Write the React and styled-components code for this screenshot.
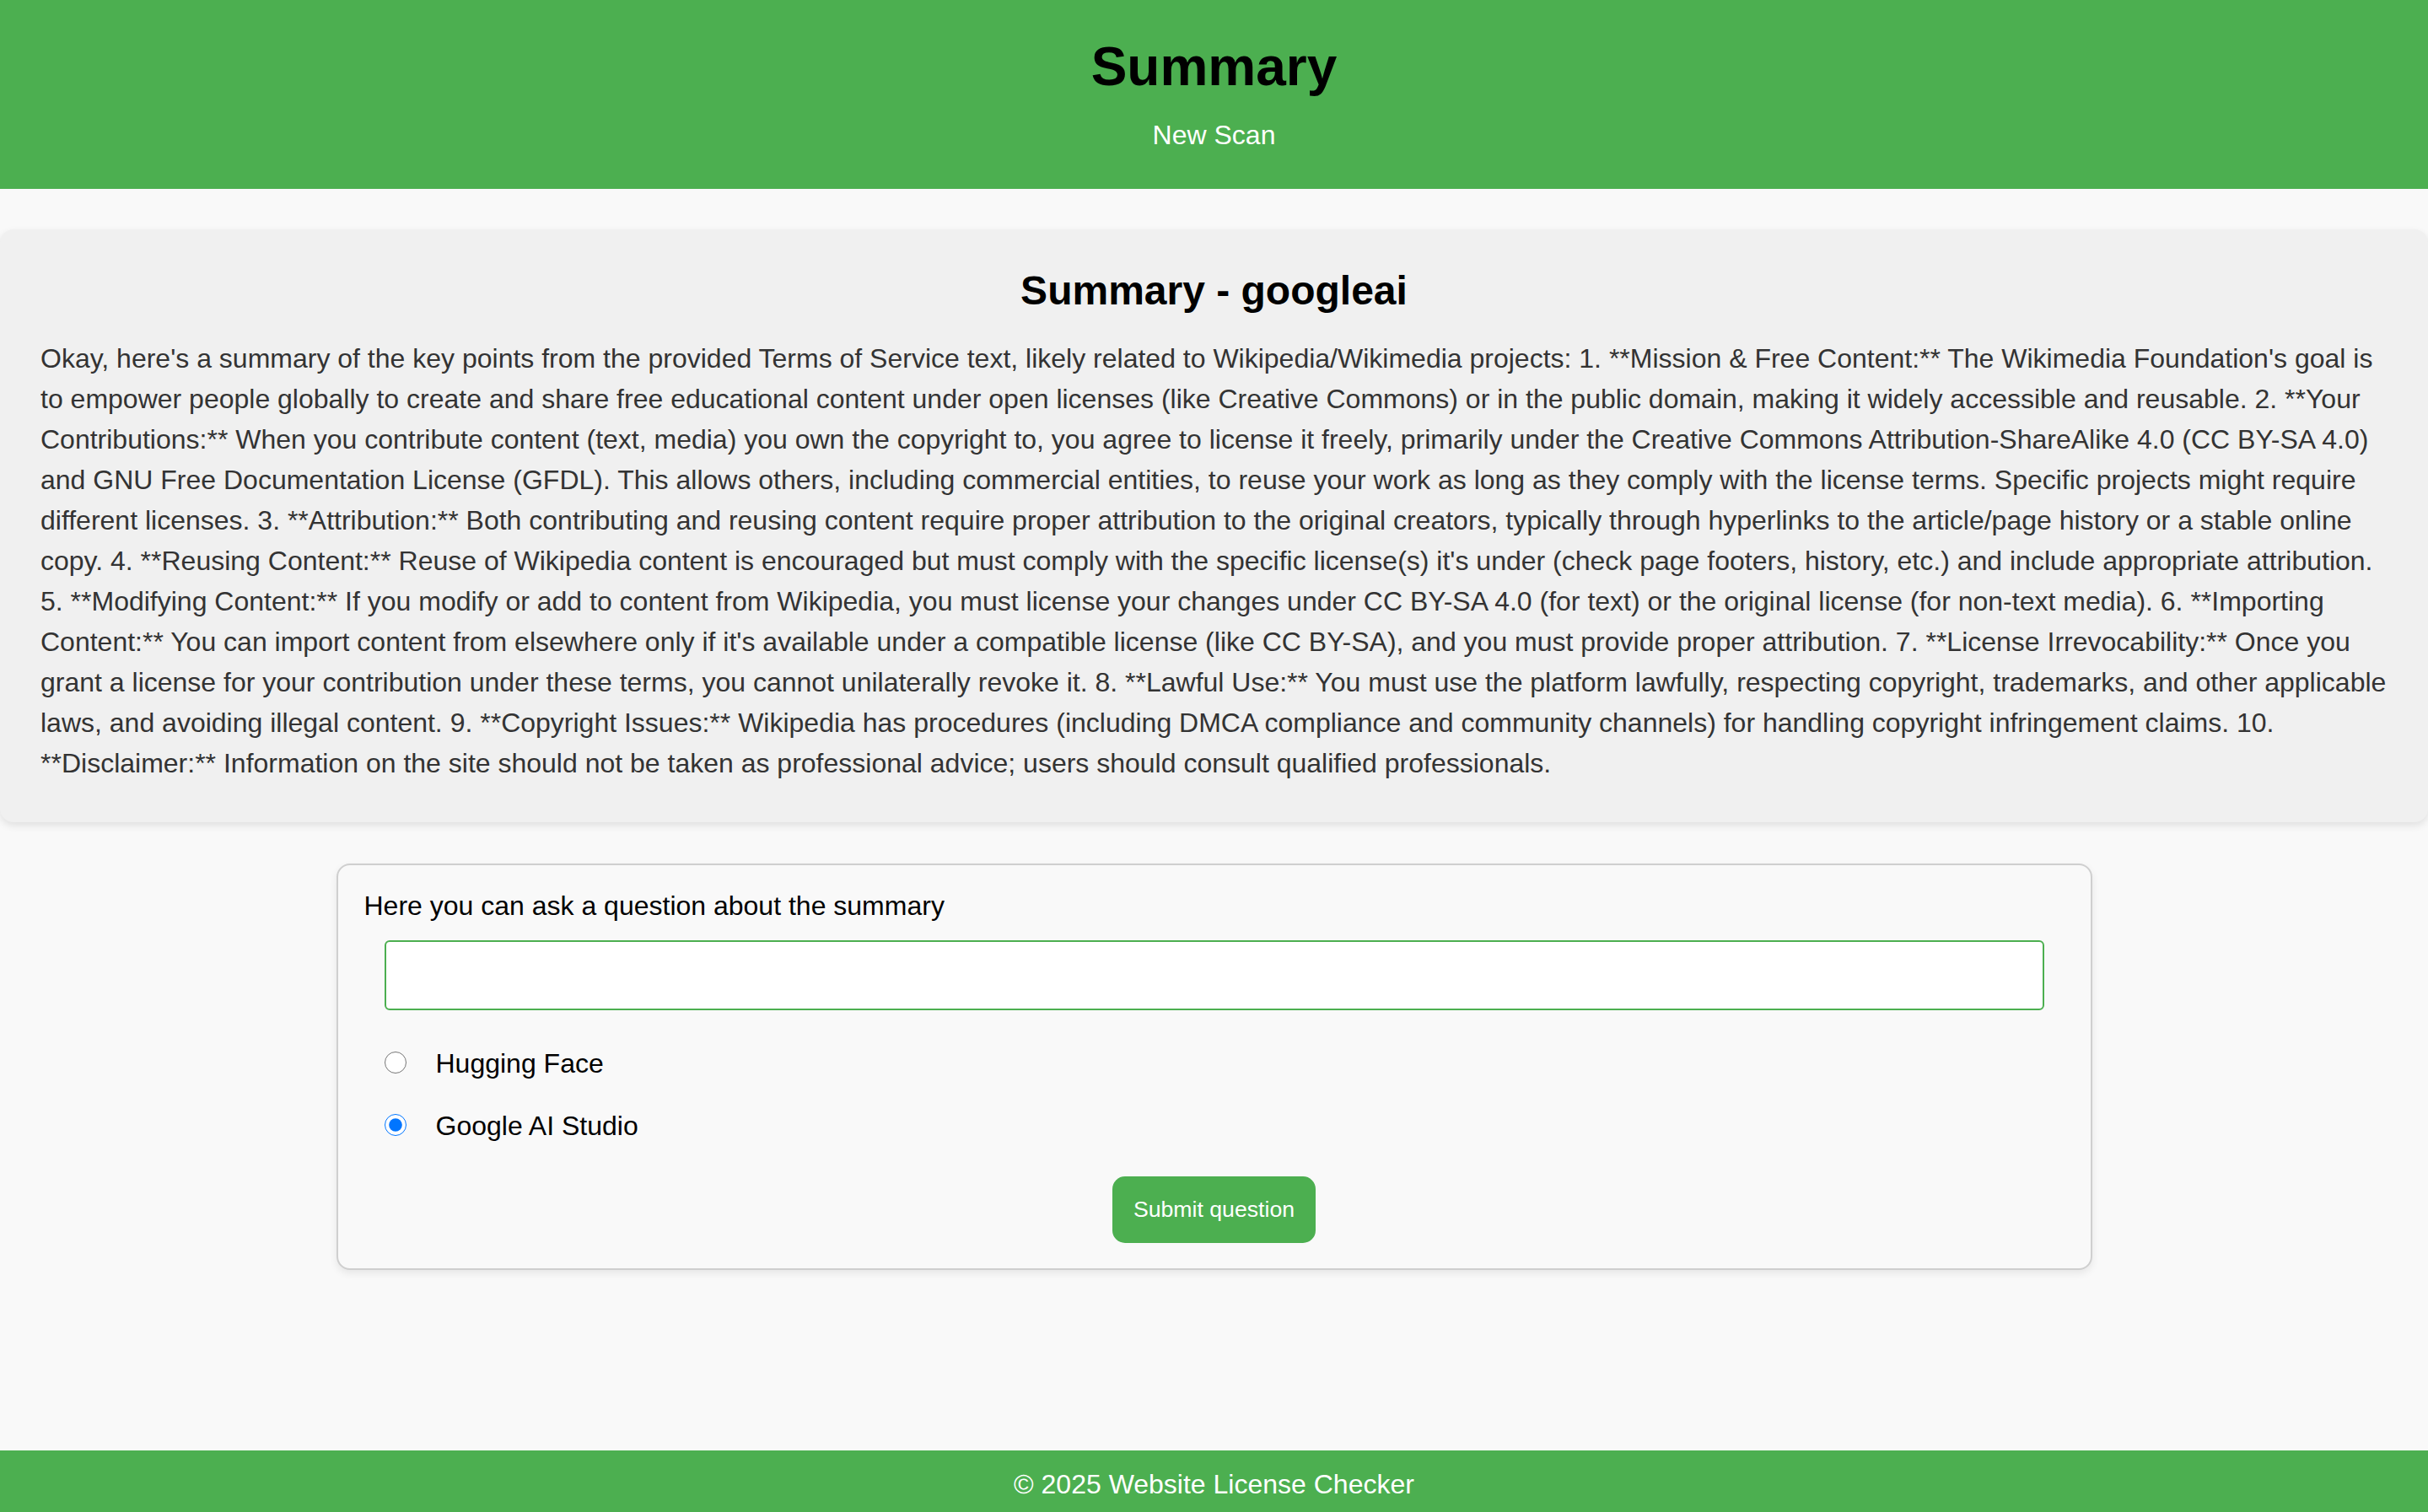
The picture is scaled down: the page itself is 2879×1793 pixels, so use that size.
import React, { useState } from 'react';
import styled, { createGlobalStyle } from 'styled-components';

const GlobalStyle = createGlobalStyle`
  html, body {
    margin: 0;
    padding: 0;
  }
  body {
    background-color: #f9f9f9;
    font-family: "Liberation Sans", Arial, sans-serif;
  }
  * {
    box-sizing: border-box;
  }
`;

const Page = styled.div`
  min-height: 100vh;
  display: flex;
  flex-direction: column;
`;

const Header = styled.header`
  background-color: #4caf50;
  text-align: center;
  padding: 43px 0 45px;
`;

const Title = styled.h1`
  margin: 0 0 26px;
  font-size: 64px;
  line-height: 73px;
  font-weight: bold;
  color: #000;
`;

const NavLink = styled.a`
  display: block;
  font-size: 32px;
  line-height: 37px;
  color: #fff;
  text-decoration: none;
`;

const Main = styled.main`
  display: flex;
  flex-direction: column;
  align-items: center;
  padding-top: 48px;
`;

const SummaryCard = styled.section`
  width: 100%;
  background-color: #f0f0f0;
  border-radius: 16px;
  box-shadow: 0 4px 10px rgba(0, 0, 0, 0.1);
  padding: 45px 48px 46px;
`;

const SummaryTitle = styled.h2`
  margin: 0 0 29px;
  text-align: center;
  font-size: 48px;
  line-height: 55px;
  font-weight: bold;
  color: #000;
`;

const SummaryText = styled.p`
  margin: 0;
  font-size: 32px;
  line-height: 48px;
  color: #333;
`;

const QuestionCard = styled.form`
  width: 2082px;
  margin-top: 49px;
  border: 2px solid #cfcfcf;
  border-radius: 16px;
  background-color: #f9f9f9;
  box-shadow: 0 4px 10px rgba(0, 0, 0, 0.08);
  padding: 30px 31px 30px;
  display: flex;
  flex-direction: column;
`;

const QuestionLabel = styled.label`
  font-size: 32px;
  line-height: 37px;
  color: #000;
`;

const Fields = styled.div`
  display: flex;
  flex-direction: column;
  margin: 22px 24px 0;
`;

const QuestionInput = styled.input`
  width: 100%;
  height: 83px;
  border: 2px solid #4caf50;
  border-radius: 6px;
  background: #fff;
  padding: 0 16px;
  font-size: 30px;
  font-family: inherit;
  outline: none;
`;

const ModelList = styled.div`
  display: flex;
  flex-direction: column;
  gap: 37px;
  margin-top: 45px;
`;

const ModelOption = styled.label`
  display: flex;
  align-items: center;
  gap: 35px;
  font-size: 32px;
  line-height: 37px;
  color: #000;
  cursor: pointer;
`;

const Radio = styled.input`
  width: 26px;
  height: 26px;
  margin: 0 0 4px;
`;

const SubmitButton = styled.button`
  align-self: center;
  margin-top: 41px;
  height: 79px;
  padding: 0 25px;
  border: none;
  border-radius: 15px;
  background-color: #4caf50;
  color: #fff;
  font-family: inherit;
  font-size: 26.67px;
  cursor: pointer;
`;

const Footer = styled.footer`
  margin-top: auto;
  background-color: #4caf50;
  color: #fff;
  text-align: center;
  font-size: 32px;
  line-height: 37px;
  padding: 22px 0 14px;
`;

const summary = "Okay, here's a summary of the key points from the provided Terms of Service text, likely related to Wikipedia/Wikimedia projects: 1. **Mission & Free Content:** The Wikimedia Foundation's goal is to empower people globally to create and share free educational content under open licenses (like Creative Commons) or in the public domain, making it widely accessible and reusable. 2. **Your Contributions:** When you contribute content (text, media) you own the copyright to, you agree to license it freely, primarily under the Creative Commons Attribution-ShareAlike 4.0 (CC BY-SA 4.0) and GNU Free Documentation License (GFDL). This allows others, including commercial entities, to reuse your work as long as they comply with the license terms. Specific projects might require different licenses. 3. **Attribution:** Both contributing and reusing content require proper attribution to the original creators, typically through hyperlinks to the article/page history or a stable online copy. 4. **Reusing Content:** Reuse of Wikipedia content is encouraged but must comply with the specific license(s) it's under (check page footers, history, etc.) and include appropriate attribution. 5. **Modifying Content:** If you modify or add to content from Wikipedia, you must license your changes under CC BY-SA 4.0 (for text) or the original license (for non-text media). 6. **Importing Content:** You can import content from elsewhere only if it's available under a compatible license (like CC BY-SA), and you must provide proper attribution. 7. **License Irrevocability:** Once you grant a license for your contribution under these terms, you cannot unilaterally revoke it. 8. **Lawful Use:** You must use the platform lawfully, respecting copyright, trademarks, and other applicable laws, and avoiding illegal content. 9. **Copyright Issues:** Wikipedia has procedures (including DMCA compliance and community channels) for handling copyright infringement claims. 10. **Disclaimer:** Information on the site should not be taken as professional advice; users should consult qualified professionals.";

const models = [
  { value: 'huggingface', label: 'Hugging Face' },
  { value: 'googleai', label: 'Google AI Studio' },
];

export default function App() {
  const [model, setModel] = useState('googleai');
  const [question, setQuestion] = useState('');

  const onSubmit = (e) => {
    e.preventDefault();
  };

  return (
    <>
      <GlobalStyle />
      <Page>
        <Header>
          <Title>Summary</Title>
          <NavLink href="#">New Scan</NavLink>
        </Header>
        <Main>
          <SummaryCard>
            <SummaryTitle>Summary - googleai</SummaryTitle>
            <SummaryText>{summary}</SummaryText>
          </SummaryCard>
          <QuestionCard onSubmit={onSubmit}>
            <QuestionLabel htmlFor="question">Here you can ask a question about the summary</QuestionLabel>
            <Fields>
              <QuestionInput
                id="question"
                type="text"
                value={question}
                onChange={(e) => setQuestion(e.target.value)}
              />
              <ModelList>
                {models.map((m) => (
                  <ModelOption key={m.value}>
                    <Radio
                      type="radio"
                      name="model"
                      value={m.value}
                      checked={model === m.value}
                      onChange={() => setModel(m.value)}
                    />
                    {m.label}
                  </ModelOption>
                ))}
              </ModelList>
            </Fields>
            <SubmitButton type="submit">Submit question</SubmitButton>
          </QuestionCard>
        </Main>
        <Footer>© 2025 Website License Checker</Footer>
      </Page>
    </>
  );
}
